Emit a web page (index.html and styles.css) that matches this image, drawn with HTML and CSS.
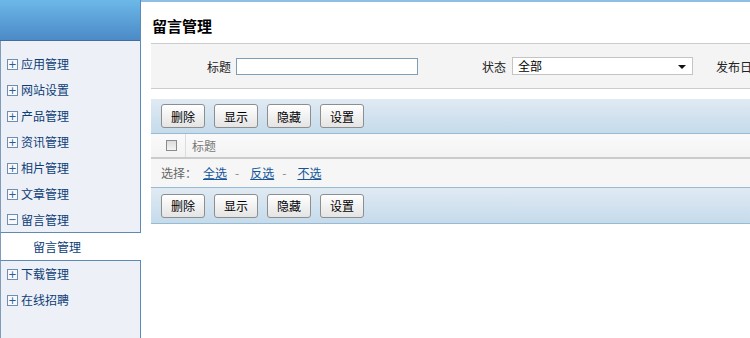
FILE: index.html
```html
<!DOCTYPE html>
<html lang="zh-CN">
<head>
  <meta charset="UTF-8" />
  <title>留言管理</title>
  <link rel="stylesheet" href="styles.css">
</head>
<body>
  <div class="layout">
    <div class="side">
      <div class="side-box">
        <div class="side-head"></div>
        <ul class="menu">
          <li><span class="tog">+</span>应用管理</li>
          <li><span class="tog">+</span>网站设置</li>
          <li><span class="tog">+</span>产品管理</li>
          <li><span class="tog">+</span>资讯管理</li>
          <li><span class="tog">+</span>相片管理</li>
          <li><span class="tog">+</span>文章管理</li>
          <li><span class="tog">&minus;</span>留言管理</li>
        </ul>
      </div>
      <div class="sub-item">留言管理</div>
      <div class="side-box rest">
        <ul class="menu">
          <li><span class="tog">+</span>下载管理</li>
          <li><span class="tog">+</span>在线招聘</li>
        </ul>
      </div>
    </div>

    <div class="main">
      <h2 class="title">留言管理</h2>
      <div class="search">
        <label class="lbl lbl-1">标题</label>
        <input type="text" class="txt" />
        <label class="lbl lbl-2">状态</label>
        <span class="sel">全部<i class="caret"></i></span>
        <label class="lbl lbl-3">发布日期</label>
      </div>

      <div class="toolbar">
        <button>删除</button>
        <button>显示</button>
        <button>隐藏</button>
        <button>设置</button>
      </div>
      <div class="thead">
        <div class="chk-cell"><span class="chk"></span></div>
        <div class="th">标题</div>
      </div>
      <div class="picker">
        <span class="pick-lbl">选择：</span><a href="#">全选</a><span class="dash">-</span><a href="#">反选</a><span class="dash">-</span><a href="#">不选</a>
      </div>
      <div class="toolbar">
        <button>删除</button>
        <button>显示</button>
        <button>隐藏</button>
        <button>设置</button>
      </div>
    </div>
  </div>
</body>
</html>
```

FILE: styles.css
```css
html, body { margin: 0; height: 100%; overflow: hidden; }
body { font-family: "Noto Sans CJK SC", "DejaVu Sans", sans-serif; font-size: 12px; color: #000; background: #fff; }
.layout { display: flex; height: 338px; }

.side { width: 141px; flex: none; display: flex; flex-direction: column; }
.side-box { background: #edf1f7; border-left: 1px solid #7f9cbc; border-right: 1px solid #5f8ab5; }
.side-head { height: 40px; background: linear-gradient(#6cb8e9, #4b8ac6); border-bottom: 1px solid #3e6fa3; margin-left: -1px; }
.menu { list-style: none; margin: 0; padding: 10px 0 0; }
.menu li { height: 26px; line-height: 26px; padding-left: 6px; color: #0e3d78; display: flex; align-items: center; }
.side-box:first-child { border-bottom: 1px solid #5f8ab5; }
.side-box:first-child .menu li:last-child { height: 25px; }
.tog { width: 9px; height: 9px; border: 1px solid #6d8fb3; background: #f7f9fc; color: #2a5c92; font-size: 10px; line-height: 9px; text-align: center; margin-right: 3px; font-family: "DejaVu Sans", sans-serif; }
.sub-item { height: 27px; line-height: 27px; padding-left: 32px; color: #0e3d78; border-left: 1px solid #7f9cbc; }
.rest { flex: 1; border-top: 1px solid #5f8ab5; }
.rest .menu { padding-top: 0; }

.main { flex: 1; min-width: 0; border-top: 2px solid #8ec0e6; padding-left: 10px; white-space: nowrap; }
.title { margin: 0; height: 41px; line-height: 48px; font-size: 15px; font-weight: bold; padding-left: 1px; border-bottom: 1px solid #cccccc; }
.search { height: 44px; background: #f4f4f4; border-bottom: 1px solid #cccccc; display: flex; align-items: center; }
.lbl { color: #222; }
.lbl-1 { width: 80px; text-align: right; padding-right: 5px; flex: none; }
.lbl-2 { width: 88px; text-align: right; padding-right: 6px; flex: none; }
.lbl-3 { margin-left: 23px; flex: none; }
.txt { width: 178px; height: 15px; border: 1px solid #7f9db9; margin: 0; padding: 0 1px; flex: none; }
.sel { position: relative; width: 174px; height: 16px; line-height: 16px; border: 1px solid #c4c4c4; background: #fff; padding-left: 5px; flex: none; }
.caret { position: absolute; right: 6px; top: 7px; border-left: 4px solid transparent; border-right: 4px solid transparent; border-top: 4px solid #111; }

.toolbar { margin-top: 10px; height: 34px; background: linear-gradient(#e0eaf3, #c5dbeb); border-bottom: 1px solid #98bad5; display: flex; align-items: center; padding-left: 10px; gap: 9px; }
.picker + .toolbar { margin-top: 0; height: 35px; }
.toolbar button { width: 44px; height: 24px; padding: 0; font: inherit; font-size: 12px; color: #000; border: 1px solid #8e8e8e; border-radius: 3px; background: linear-gradient(#ffffff, #e4e4e4); }

.thead { height: 23px; display: flex; align-items: stretch; background: linear-gradient(#fafafa, #f3f3f3); border-bottom: 2px solid #cbcbcb; }
.chk-cell { width: 34px; border-right: 1px solid #dddddd; display: flex; align-items: center; }
.chk { width: 9px; height: 9px; margin-left: 15px; border: 1px solid #8b8b8b; background: linear-gradient(#dcdcdc, #f4f4f4); }
.th { padding-left: 6px; line-height: 23px; color: #777; }

.picker { height: 28px; line-height: 28px; background: #f6f6f6; border-bottom: 1px solid #98bad5; padding-left: 10px; color: #666; }
.pick-lbl { margin-right: 4px; }
.picker a { color: #14559a; text-decoration: underline; margin: 0 2px; }
.dash { color: #888; margin: 0 9px 0 6px; }
```
